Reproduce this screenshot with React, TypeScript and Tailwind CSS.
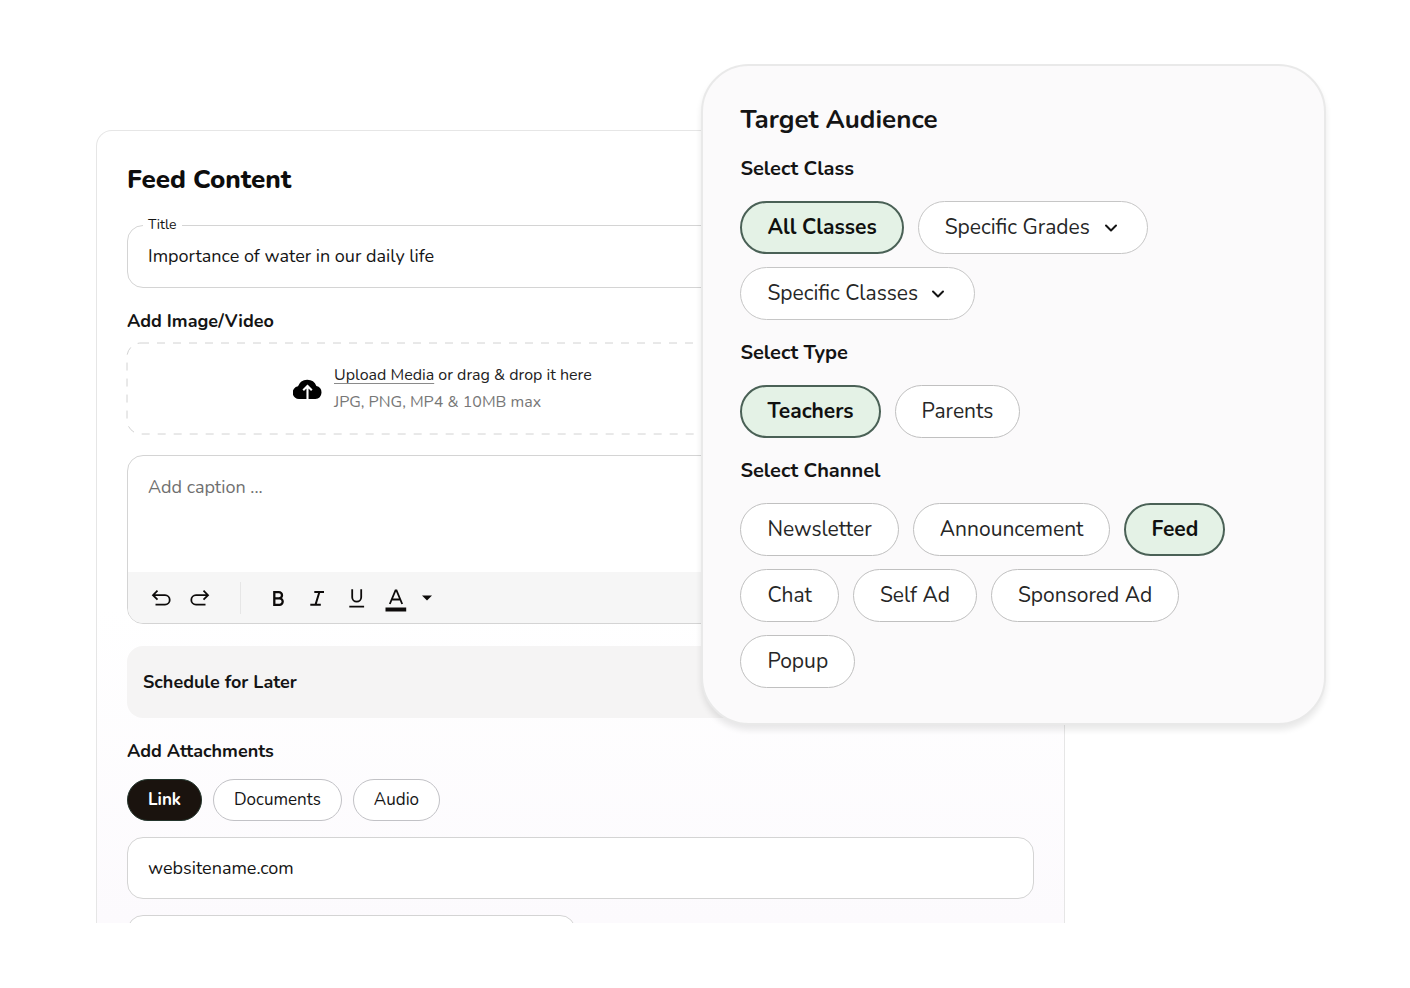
import { ChevronDown } from "lucide-react";
import clsx from "clsx";
import type { ReactNode } from "react";

type Option = {
  label: string;
  selected?: boolean;
  dropdown?: boolean;
};

type AudienceGroup = {
  title: string;
  options: Option[];
};

const audienceGroups: AudienceGroup[] = [
  {
    title: "Select Class",
    options: [
      { label: "All Classes", selected: true },
      { label: "Specific Grades", dropdown: true },
      { label: "Specific Classes", dropdown: true },
    ],
  },
  {
    title: "Select Type",
    options: [{ label: "Teachers", selected: true }, { label: "Parents" }],
  },
  {
    title: "Select Channel",
    options: [
      { label: "Newsletter" },
      { label: "Announcement" },
      { label: "Feed", selected: true },
      { label: "Chat" },
      { label: "Self Ad" },
      { label: "Sponsored Ad" },
      { label: "Popup" },
    ],
  },
];

const attachmentTypes: Option[] = [
  { label: "Link", selected: true },
  { label: "Documents" },
  { label: "Audio" },
];

function CloudUploadIcon() {
  return (
    <svg width="29" height="22" viewBox="0 0 29 22" aria-hidden="true">
      <path d="M6.4 21A6.4 6.4 0 0 1 5 8.3 9.8 9.8 0 0 1 23.4 8 6.6 6.6 0 0 1 22.4 21Z" />
      <path
        d="M14.5 22V8.2M10.2 12.2l4.3-4.300 4.300 4.300"
        fill="none"
        stroke="#fff"
        strokeWidth="2.1"
      />
    </svg>
  );
}

function ToolButton({ label, children }: { label: string; children: ReactNode }) {
  return (
    <button type="button" aria-label={label} className="shrink-0">
      <svg
        width="24"
        height="24"
        viewBox="0 0 24 24"
        fill="none"
        stroke="currentColor"
        strokeWidth="1.8"
        className="overflow-visible"
      >
        {children}
      </svg>
    </button>
  );
}

function Toolbar() {
  return (
    <div className="flex h-[51px] items-center gap-[15px] bg-[#f6f6f6] pl-[21px] text-[#0d0b0a]">
      <ToolButton label="Undo">
        <path d="M8.5 4.700 4 9.200l4.500 4.500M4.500 9.200H16a4.700 4.700 0 0 1 0 9.400H6.500" />
      </ToolButton>
      <ToolButton label="Redo">
        <path d="M15.500 4.700 20 9.200l-4.500 4.500M19.500 9.200H8a4.700 4.700 0 0 0 0 9.400h9.500" />
      </ToolButton>
      <span className="ml-[13px] mr-[10px] h-8 w-px bg-[#e6e6e6]" />
      <ToolButton label="Bold">
        <path
          strokeWidth="2.3"
          d="M8.300 6.200h4.600a3.100 3.100 0 0 1 0 6.200H8.300zM8.300 12.400h5.200a3.200 3.200 0 0 1 0 6.400H8.300z"
        />
      </ToolButton>
      <ToolButton label="Italic">
        <path strokeWidth="2" d="M9.300 6h9.700M5.300 18.800h10.500M14.400 6l-3.900 12.800" />
      </ToolButton>
      <ToolButton label="Underline">
        <path d="M8.200 3.200v8a4.500 4.500 0 0 0 9 0v-8M5.300 20.600h14.800" />
      </ToolButton>
      <ToolButton label="Text colour">
        <path d="M6.800 18 12.500 4.300h1L19.200 18M8.800 13.500h8.400" />
        <path strokeWidth="4" d="M2.500 23.500h20.700" />
      </ToolButton>
      <button type="button" aria-label="More colours">
        <svg width="10" height="6" viewBox="0 0 10 6" fill="currentColor">
          <path d="M0 .5h10L5 5.500z" />
        </svg>
      </button>
    </div>
  );
}

function AudienceChip({ label, selected, dropdown }: Option) {
  if (dropdown) {
    return (
      <div className="relative">
        <select
          aria-label={label}
          className="h-[53px] appearance-none rounded-full border border-[#c6c6c6] bg-white pl-[26px] pr-14 text-[21px] text-[#262626]"
        >
          <option>{label}</option>
        </select>
        <ChevronDown
          size={20}
          strokeWidth={2.4}
          className="pointer-events-none absolute right-[27px] top-[17px] text-[#141414]"
        />
      </div>
    );
  }

  return (
    <button
      type="button"
      aria-pressed={!!selected}
      className={clsx(
        "h-[53px] rounded-full text-[21px]",
        selected
          ? "border-2 border-[#4a6156] bg-[#e4f2e6] px-[25px] font-bold text-[#10100f]"
          : "border border-[#c0c0c0] bg-white px-[26px] text-[#262626]",
      )}
    >
      {label}
    </button>
  );
}

function FeedContent() {
  return (
    <section className="rounded-t-2xl border border-b-0 border-[#e6e6e6] bg-linear-to-b from-white from-60% to-[#fcfafd] px-[30px] pt-[31px]">
      <h2 className="text-[26px] font-extrabold leading-9 text-[#0d0d0d]">
        Feed Content
      </h2>

      <fieldset className="mt-[17px] rounded-2xl border border-[#d4d4d4] bg-white px-[15px]">
        <legend className="px-[5px] text-[14px] leading-5">
          <label htmlFor="feed-title">Title</label>
        </legend>
        <input
          id="feed-title"
          defaultValue="Importance of water in our daily life"
          className="mb-[10px] h-[42px] w-full px-[5px] text-[18px] outline-none"
        />
      </fieldset>

      <h3 className="mt-[19px] text-[18px] font-bold leading-7">
        Add Image/Video
      </h3>
      <div className="relative mt-2 flex h-[91px] items-center gap-3 pl-[166px]">
        <svg
          className="pointer-events-none absolute inset-0 h-full w-full overflow-visible"
          aria-hidden="true"
        >
          <rect
            width="100%"
            height="100%"
            rx="14"
            fill="none"
            stroke="#d2d2d2"
            strokeDasharray="8 8"
          />
        </svg>
        <CloudUploadIcon />
        <div className="text-[16px] leading-[27px]">
          <p className="text-[#222]">
            <button
              type="button"
              className="underline decoration-[#8a8a8a] decoration-1 underline-offset-3"
            >
              Upload Media
            </button>{" "}
            or drag &amp; drop it here
          </p>
          <p className="text-[#777]">JPG, PNG, MP4 &amp; 10MB max</p>
        </div>
      </div>

      <div className="mt-[21px] overflow-hidden rounded-2xl border border-[#d4d4d4] bg-white">
        <textarea
          aria-label="Caption"
          placeholder="Add caption ..."
          className="block h-[116px] w-full resize-none px-5 py-[17px] text-[18px] leading-7 outline-none placeholder:text-[#707070]"
        />
        <Toolbar />
      </div>

      <div className="mt-[22px] flex h-[72px] items-center rounded-2xl bg-[#f5f4f4] px-4">
        <h3 className="text-[18px] font-bold">Schedule for Later</h3>
      </div>

      <h3 className="mt-[19px] text-[18px] font-bold leading-7">
        Add Attachments
      </h3>
      <div className="mt-[14px] flex gap-[11px]">
        {attachmentTypes.map(({ label, selected }) => (
          <button
            key={label}
            type="button"
            aria-pressed={!!selected}
            className={clsx(
              "h-[42px] rounded-full border px-5 text-[17px]",
              selected
                ? "border-[#23352c] bg-[#1a130e] font-bold text-white"
                : "border-[#c2c2c6] bg-white",
            )}
          >
            {label}
          </button>
        ))}
      </div>
      <input
        aria-label="Link"
        defaultValue="websitename.com"
        className="mt-4 block h-[62px] w-full rounded-2xl border border-[#d4d4d4] bg-white px-5 text-[18px] outline-none"
      />
      <div className="mt-4 h-2 overflow-hidden">
        <div className="h-[62px] w-[449px] rounded-2xl border border-[#d4d4d4] bg-white" />
      </div>
    </section>
  );
}

function TargetAudience() {
  return (
    <section className="absolute right-[84px] top-[64px] flex w-[44.3%] flex-col gap-[19px] rounded-[48px] border-2 border-[#e9e9e9] bg-[#fbfafb] px-[37px] pb-[35px] pt-[38px] shadow-[0_5px_6px_rgba(0,0,0,0.09)]">
      <h2 className="text-[26px] font-bold leading-8">Target Audience</h2>
      {audienceGroups.map((group) => (
        <div key={group.title}>
          <h3 className="text-[20px] font-bold leading-7">{group.title}</h3>
          <div className="mt-[18px] flex flex-wrap gap-x-[14px] gap-y-[13px]">
            {group.options.map((option) => (
              <AudienceChip key={option.label} {...option} />
            ))}
          </div>
        </div>
      ))}
    </section>
  );
}

export default function App() {
  return (
    <main className="relative min-h-screen bg-white pb-16 pl-24 pr-[345px] pt-[130px] font-['Nunito',Lato,sans-serif] text-[#141414]">
      <FeedContent />
      <TargetAudience />
    </main>
  );
}
